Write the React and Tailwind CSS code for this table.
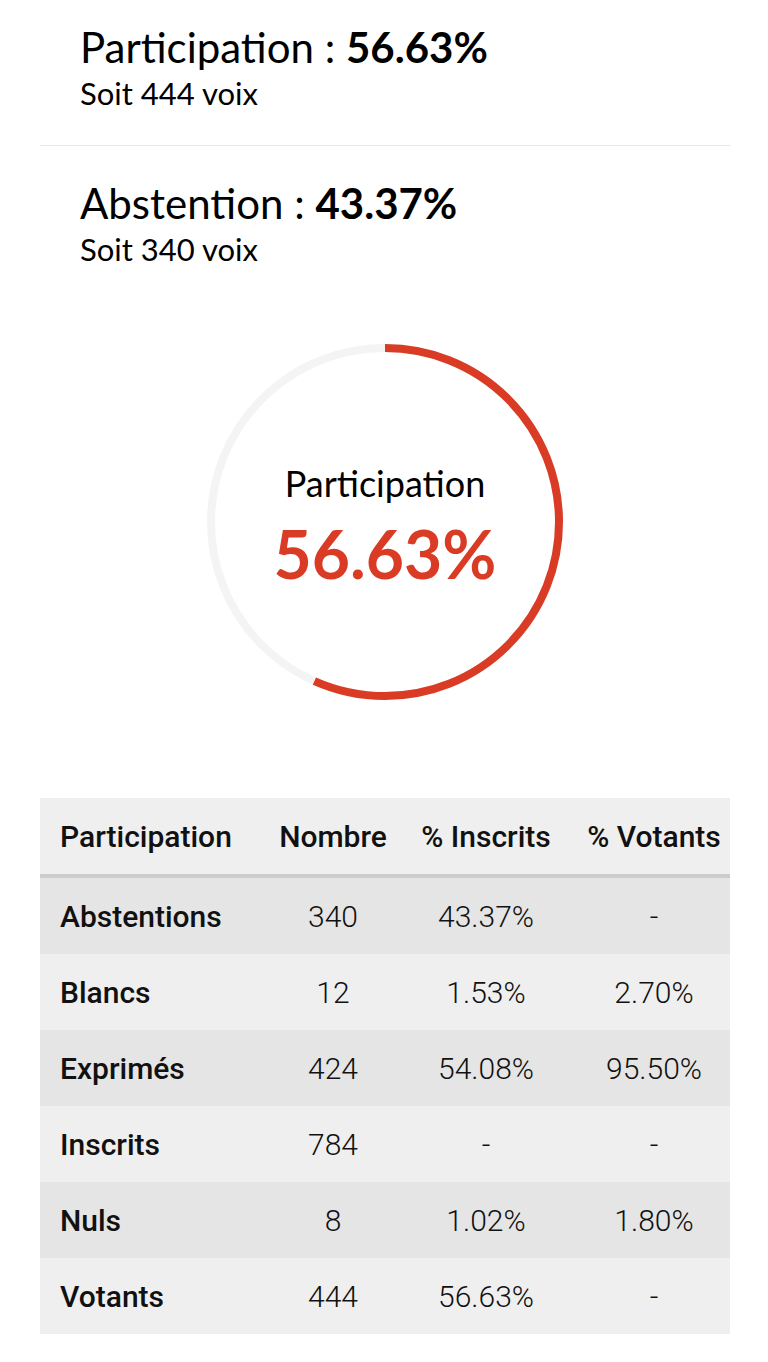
import React from 'react';

const rows = [
  { label: 'Abstentions', nombre: '340', inscrits: '43.37%', votants: '-' },
  { label: 'Blancs', nombre: '12', inscrits: '1.53%', votants: '2.70%' },
  { label: 'Exprimés', nombre: '424', inscrits: '54.08%', votants: '95.50%' },
  { label: 'Inscrits', nombre: '784', inscrits: '-', votants: '-' },
  { label: 'Nuls', nombre: '8', inscrits: '1.02%', votants: '1.80%' },
  { label: 'Votants', nombre: '444', inscrits: '56.63%', votants: '-' },
];

const Ring = ({ value }) => {
  const r = 174;
  const c = 2 * Math.PI * r;
  return (
    <div className="relative w-[360px] h-[360px]">
      <svg width="360" height="360" viewBox="0 0 360 360" className="-rotate-90">
        <circle cx="180" cy="180" r={r} fill="none" stroke="#f4f4f4" strokeWidth="8" />
        <circle
          cx="180"
          cy="180"
          r={r}
          fill="none"
          stroke="#d93b25"
          strokeWidth="8"
          strokeDasharray={`${(value / 100) * c} ${c}`}
        />
      </svg>
      <div className="absolute inset-0 flex flex-col items-center justify-center font-['Lato',sans-serif]">
        <div className="text-[36px] leading-none text-black mt-[8px]">Participation</div>
        <div className="text-[66px] leading-none font-bold text-[#d93b25] mt-[20px]">{value}%</div>
      </div>
    </div>
  );
};

export default function App() {
  return (
    <div className="w-[768px] min-h-[1362px] bg-white">
      <div className="mx-[40px] w-[690px]">
        {/* Participation */}
        <div className="px-[40px] pt-[22px] pb-[34px] border-b border-[#e6e6e6] font-['Lato',sans-serif]">
          <div className="text-[42px] leading-[50px] text-black">
            Participation : <span className="font-bold">56.63%</span>
          </div>
          <div className="text-[31px] leading-[36px] text-black mt-[3px]">Soit 444 voix</div>
        </div>

        {/* Abstention */}
        <div className="px-[40px] pt-[32px] font-['Lato',sans-serif]">
          <div className="text-[42px] leading-[50px] text-black">
            Abstention : <span className="font-bold">43.37%</span>
          </div>
          <div className="text-[31px] leading-[36px] text-black mt-[3px]">Soit 340 voix</div>
        </div>

        {/* Ring chart */}
        <div className="flex justify-center mt-[75px]">
          <Ring value="56.63" />
        </div>

        {/* Table */}
        <div className="mt-[96px] font-['Roboto',sans-serif] text-[30px] text-[#111]">
          <div className="grid grid-cols-[232px_122px_184px_152px] h-[80px] items-center bg-[#efefef] border-b-4 border-[#cccccc] font-medium">
            <div className="pl-[20px]">Participation</div>
            <div className="text-center">Nombre</div>
            <div className="text-center">% Inscrits</div>
            <div className="text-center whitespace-nowrap">% Votants</div>
          </div>
          {rows.map((row, i) => (
            <div
              key={row.label}
              className={`grid grid-cols-[232px_122px_184px_152px] h-[76px] items-center ${i % 2 === 0 ? 'bg-[#e5e5e5]' : 'bg-[#efefef]'}`}
            >
              <div className="pl-[20px] font-medium">{row.label}</div>
              <div className="text-center font-light">{row.nombre}</div>
              <div className="text-center font-light">{row.inscrits}</div>
              <div className="text-center font-light">{row.votants}</div>
            </div>
          ))}
        </div>
      </div>
    </div>
  );
}
